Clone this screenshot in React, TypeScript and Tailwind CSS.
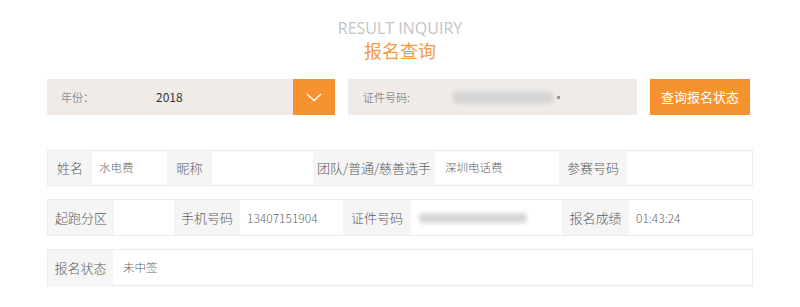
import React from 'react';

const font = { fontFamily: '"Noto Sans CJK SC", "Noto Sans", sans-serif' };

function Label({ w, children }: { w: string; children?: React.ReactNode }) {
  return (
    <div className={`${w} h-full flex items-center justify-center bg-[#f5f5f5] text-[13px] font-light text-[#5c5c5c] whitespace-nowrap`}>
      {children}
    </div>
  );
}

function Value({ w, children }: { w: string; children?: React.ReactNode }) {
  return (
    <div className={`${w} h-full flex items-center pl-[7px] bg-white text-[11.5px] font-light text-[#666] whitespace-nowrap`}>
      {children}
    </div>
  );
}

function Blur({ w, h }: { w: string; h: string }) {
  return <div className={`${w} ${h} bg-[#d6d6d6] blur-[2px] rounded-sm`} />;
}

export default function App() {
  return (
    <div className="w-[800px] h-[307px] bg-white overflow-hidden" style={font}>
      {/* title */}
      <div className="pt-[20px] flex flex-col items-center leading-none">
        <div className="text-[16px] text-[#c4c4c4]" style={{ fontFamily: '"Open Sans", "Noto Sans", sans-serif' }}>
          RESULT INQUIRY
        </div>
        <div className="mt-[5px] text-[18px] text-[#f39a45]">报名查询</div>
      </div>

      {/* search bar */}
      <div className="mt-[20px] ml-[47px] flex h-[36px] gap-[13px]">
        <div className="w-[288px] flex bg-[#f0ebe7]">
          <div className="flex-1 flex items-center pl-[14px]">
            <span className="text-[11px] font-light text-[#666] w-[95px]">年份：</span>
            <span className="text-[12px] text-[#333]">2018</span>
          </div>
          <div className="w-[42px] bg-[#f7932f] flex items-center justify-center">
            <svg width="16" height="9" viewBox="0 0 16 9" fill="none">
              <path d="M1 1l7 6.5L15 1" stroke="white" strokeWidth="1.3" />
            </svg>
          </div>
        </div>
        <div className="w-[289px] flex items-center bg-[#f0ebe7] pl-[15px]">
          <span className="text-[11px] font-light text-[#666] w-[90px]">证件号码:</span>
          <div className="flex items-center gap-[4px]">
            <Blur w="w-[100px]" h="h-[13px]" />
            <div className="w-[3px] h-[3px] bg-[#999] blur-[0.5px]" />
          </div>
        </div>
        <div className="w-[100px] bg-[#f7932f] flex items-center justify-center text-white text-[13px]">
          查询报名状态
        </div>
      </div>

      {/* result rows */}
      <div className="mt-[35px] ml-[47px] w-[706px] flex flex-col gap-[13px]">
        <div className="h-[36px] flex border border-[#ececec]">
          <Label w="w-[44px]">姓名</Label>
          <Value w="w-[75px]">水电费</Value>
          <Label w="w-[45px]">昵称</Label>
          <Value w="w-[101px]" />
          <Label w="w-[122px]">团队/普通/慈善选手</Label>
          <Value w="w-[124px]"><span className="pl-[3px]">深圳电话费</span></Value>
          <Label w="w-[68px]">参赛号码</Label>
          <Value w="flex-1" />
        </div>
        <div className="h-[37px] flex border border-[#ececec]">
          <Label w="w-[66px]">起跑分区</Label>
          <Value w="w-[60px]" />
          <Label w="w-[66px]">手机号码</Label>
          <Value w="w-[103px]"><span className="text-[12px]">13407151904</span></Value>
          <Label w="w-[68px]">证件号码</Label>
          <Value w="w-[151px]">
            <div className="pl-[1px]"><Blur w="w-[108px]" h="h-[10px]" /></div>
          </Value>
          <Label w="w-[67px]">报名成绩</Label>
          <Value w="flex-1"><span className="text-[12px]">01:43:24</span></Value>
        </div>
        <div className="h-[37px] flex border border-[#ececec]">
          <Label w="w-[65px]">报名状态</Label>
          <Value w="flex-1"><span className="pl-[3px]">未中签</span></Value>
        </div>
      </div>
    </div>
  );
}
